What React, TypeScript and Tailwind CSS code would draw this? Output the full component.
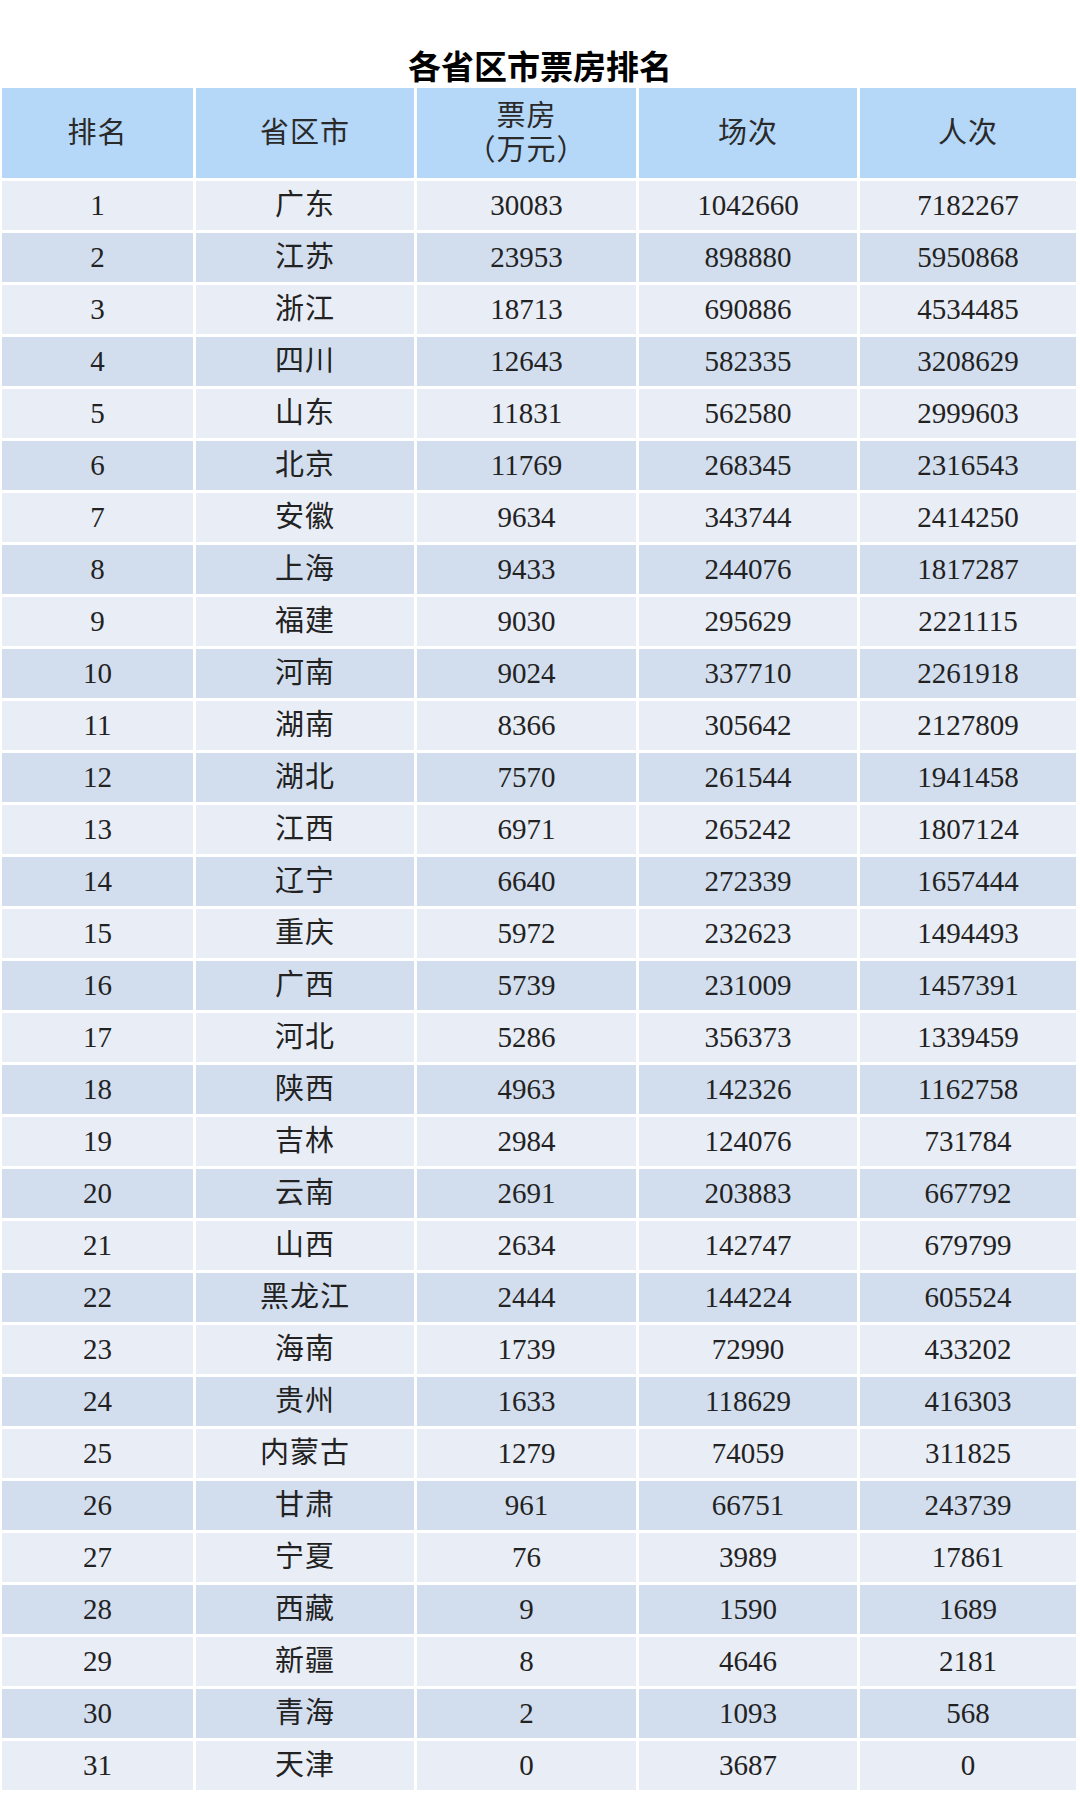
const rows: [number, string, number, number, number][] = [
  [1, "广东", 30083, 1042660, 7182267],
  [2, "江苏", 23953, 898880, 5950868],
  [3, "浙江", 18713, 690886, 4534485],
  [4, "四川", 12643, 582335, 3208629],
  [5, "山东", 11831, 562580, 2999603],
  [6, "北京", 11769, 268345, 2316543],
  [7, "安徽", 9634, 343744, 2414250],
  [8, "上海", 9433, 244076, 1817287],
  [9, "福建", 9030, 295629, 2221115],
  [10, "河南", 9024, 337710, 2261918],
  [11, "湖南", 8366, 305642, 2127809],
  [12, "湖北", 7570, 261544, 1941458],
  [13, "江西", 6971, 265242, 1807124],
  [14, "辽宁", 6640, 272339, 1657444],
  [15, "重庆", 5972, 232623, 1494493],
  [16, "广西", 5739, 231009, 1457391],
  [17, "河北", 5286, 356373, 1339459],
  [18, "陕西", 4963, 142326, 1162758],
  [19, "吉林", 2984, 124076, 731784],
  [20, "云南", 2691, 203883, 667792],
  [21, "山西", 2634, 142747, 679799],
  [22, "黑龙江", 2444, 144224, 605524],
  [23, "海南", 1739, 72990, 433202],
  [24, "贵州", 1633, 118629, 416303],
  [25, "内蒙古", 1279, 74059, 311825],
  [26, "甘肃", 961, 66751, 243739],
  [27, "宁夏", 76, 3989, 17861],
  [28, "西藏", 9, 1590, 1689],
  [29, "新疆", 8, 4646, 2181],
  [30, "青海", 2, 1093, 568],
  [31, "天津", 0, 3687, 0],
]

const font = "font-['Liberation_Serif','Noto_Sans_CJK_SC',serif]"

function Header({ children }: { children: React.ReactNode }) {
  return (
    <div className="bg-[#b5d7f8] h-[90px] flex flex-col items-center justify-center text-[29px] leading-[34px] tracking-[1px] text-[#2a2a2a]">
      {children}
    </div>
  )
}

export default function App() {
  return (
    <div className={`w-[1080px] h-[1800px] bg-white ${font} text-[#222]`}>
      <h1 className="pt-[45px] h-[88px] text-center text-[33px] leading-[40px] font-bold text-black font-['Noto_Sans_CJK_SC',sans-serif]">
        各省区市票房排名
      </h1>

      <div className="px-[2px] grid grid-cols-[191px_218px_219px_218px_216px] gap-[3px]">
        <Header>排名</Header>
        <Header>省区市</Header>
        <Header>
          <span>票房</span>
          <span>（万元）</span>
        </Header>
        <Header>场次</Header>
        <Header>人次</Header>

        {rows.map((r, i) => {
          const bg = i % 2 === 0 ? "bg-[#e9edf6]" : "bg-[#d2deee]"
          return r.map((v, j) => (
            <div
              key={`${i}-${j}`}
              className={`${bg} h-[49px] flex items-center justify-center ${j === 1 ? "text-[29px] tracking-[1px]" : "text-[29px]"}`}
            >
              {v}
            </div>
          ))
        })}
      </div>
    </div>
  )
}
